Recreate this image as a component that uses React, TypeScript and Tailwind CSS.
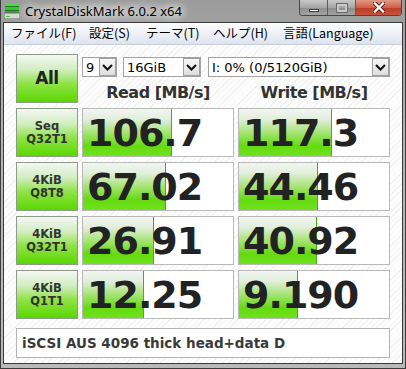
import React from 'react';

interface Row {
  l1: string;
  l2: string;
  read: string;
  readFill: number;
  write: string;
  writeFill: number;
}

const rows: Row[] = [
  { l1: 'Seq', l2: 'Q32T1', read: '106.7', readFill: 89, write: '117.3', writeFill: 93 },
  { l1: '4KiB', l2: 'Q8T8', read: '67.02', readFill: 83, write: '44.46', writeFill: 79 },
  { l1: '4KiB', l2: 'Q32T1', read: '26.91', readFill: 71, write: '40.92', writeFill: 78 },
  { l1: '4KiB', l2: 'Q1T1', read: '12.25', readFill: 61, write: '9.190', writeFill: 59 },
];

const menu = [
  { text: 'ファイル(F)', w: 'w-[78px]' },
  { text: '設定(S)', w: 'w-[57px]' },
  { text: 'テーマ(T)', w: 'w-[67px]' },
  { text: 'ヘルプ(H)', w: 'w-[70px]' },
  { text: '言語(Language)', w: 'w-[100px]' },
];

const Chevron = () => (
  <svg width="11" height="7" viewBox="0 0 11 7">
    <path d="M1 1 L5.5 5.5 L10 1" fill="none" stroke="#111" strokeWidth="2" />
  </svg>
);

const Select: React.FC<{ text: string; className: string }> = ({ text, className }) => (
  <div className={`flex h-[20px] items-center border border-[#a3a3a3] bg-white ${className}`}>
    <span className="pl-[3px] text-[13px] leading-none text-black">{text}</span>
    <div className="ml-auto flex h-full w-[17px] items-center justify-center border border-[#a0a0a0] bg-[linear-gradient(to_bottom,#f7f7f7,#dedede)]">
      <Chevron />
    </div>
  </div>
);

const ValueBox: React.FC<{ value: string; fill: number }> = ({ value, fill }) => (
  <div className="relative flex h-[49px] items-center overflow-hidden border border-[#b9b9b9] bg-white">
    {/* green bar behind the number */}
    <div
      className="absolute bottom-0 left-0 top-0 border-r border-[#45b014] bg-[linear-gradient(to_bottom,#f3f5f2_0%,#e2eedc_22%,#a6e474_50%,#66da10_78%,#6ee21c_100%)]"
      style={{ width: fill }}
    />
    <span className="relative pl-[4px] text-[38px] font-bold leading-none tracking-[-1px] text-[#222]">
      {value}
    </span>
  </div>
);

const LabelBox: React.FC<{ l1: string; l2: string }> = ({ l1, l2 }) => (
  <div className="flex h-[49px] flex-col items-center justify-center border border-[#8c9c88] bg-[linear-gradient(to_bottom,#f4f6f3_0%,#d4eec4_30%,#8ee246_62%,#5ad800_100%)] text-[11.5px] font-bold leading-[13px] text-[#333]">
    <span>{l1}</span>
    <span>{l2}</span>
  </div>
);

export default function App() {
  return (
    <div className="flex h-[369px] w-[406px] flex-col border-x border-b border-[#3c3c3c] bg-[linear-gradient(to_bottom,#9c9c9c,#b4b4b4_40%,#b9b9b9)] px-[2px] pb-[4px] font-['DejaVu_Sans',sans-serif]">
      {/* title bar */}
      <div className="-mx-[2px] flex h-[22px] items-start">
        <svg className="ml-[3px] mt-[3px]" width="16" height="16" viewBox="0 0 16 16">
          <rect x="1" y="0" width="14" height="3" rx="1" fill="#52d64a" />
          <rect x="1" y="3" width="14" height="1" fill="#1f7a1f" />
          <rect x="1" y="4" width="14" height="3" fill="#3fbf3a" />
          <rect x="1" y="7" width="14" height="1" fill="#1f7a1f" />
          <rect x="1" y="8" width="14" height="2" fill="#35a832" />
          <rect x="0" y="10" width="16" height="6" rx="1" fill="#d8d8d8" stroke="#6b6b6b" strokeWidth="1" />
          <rect x="2" y="13" width="4" height="1" fill="#3ccf3a" />
        </svg>
        <span className="ml-[5px] mt-[2px] font-['Noto_Sans',sans-serif] text-[13px] leading-[18px] text-black [text-shadow:0_0_8px_#f2f2f2,0_0_8px_#f2f2f2,0_0_10px_#eeeeee]">
          CrystalDiskMark 6.0.2 x64
        </span>
        {/* caption buttons */}
        <div className="ml-auto mr-[3px] flex h-[16px] overflow-hidden rounded-b-[4px] border border-t-0 border-[#474747]">
          <div className="flex w-[28px] items-center justify-center border-r border-[#5a5a5a] bg-[linear-gradient(to_bottom,#c9c9c9,#a6a6a6_50%,#8d8d8d_51%,#a2a2a2)]">
            <div className="mt-[5px] h-[3px] w-[10px] border border-[#3a3a3a] bg-white" />
          </div>
          <div className="flex w-[28px] items-center justify-center border-r border-[#5a5a5a] bg-[linear-gradient(to_bottom,#c9c9c9,#a6a6a6_50%,#8d8d8d_51%,#a2a2a2)]">
            <div className="h-[8px] w-[10px] border-2 border-[#c8c8c8] outline outline-1 outline-[#6a6a6a]" />
          </div>
          <div className="flex w-[45px] items-center justify-center bg-[linear-gradient(to_bottom,#e09a88,#d0604a_50%,#bb3a26_51%,#c8533a)]">
            <svg width="12" height="11" viewBox="0 0 12 11">
              <path d="M2 1.5 L10 9.5 M10 1.5 L2 9.5" stroke="#5a1a10" strokeWidth="4" strokeLinecap="square" />
              <path d="M2 1.5 L10 9.5 M10 1.5 L2 9.5" stroke="#ffffff" strokeWidth="2.4" strokeLinecap="square" />
            </svg>
          </div>
        </div>
      </div>

      {/* client area */}
      <div className="flex flex-1 flex-col border border-[#3a3a3a]">
        {/* menu bar */}
        <div className="flex h-[22px] items-center border-b border-[#c9d0dc] bg-[linear-gradient(to_bottom,#fdfdfe,#eef1f7_50%,#dde3ee)] pl-[7px] font-['Noto_Sans_CJK_JP',sans-serif] text-[12.5px] text-black">
          {menu.map((m) => (
            <span key={m.text} className={`${m.w} shrink-0 whitespace-nowrap leading-none`}>
              {m.text}
            </span>
          ))}
        </div>

        {/* main panel */}
        <div className="flex flex-1 flex-col gap-[5px] bg-[repeating-linear-gradient(135deg,#ffffff_0px,#ffffff_3px,#f0f0f0_3px,#f0f0f0_4px)] pl-[12px] pt-[9px]">
          <div className="grid grid-cols-[62px_152px_152px] gap-x-[4px]">
            <div className="flex h-[49px] items-center justify-center border border-[#8c9c88] bg-[linear-gradient(to_bottom,#f4f6f3_0%,#d4eec4_30%,#8ee246_62%,#5ad800_100%)]">
              <span className="text-[17px] font-bold leading-none tracking-[-0.5px] text-[#222]">All</span>
            </div>
            <div className="col-span-2 flex flex-col">
              <div className="mt-[3px] flex">
                <Select text="9" className="w-[35px]" />
                <Select text="16GiB" className="ml-[6px] w-[78px]" />
                <Select text="I: 0% (0/5120GiB)" className="ml-[7px] w-[182px]" />
              </div>
              <div className="grid h-[26px] grid-cols-[152px_152px] gap-x-[4px] pt-[6px] text-[16px] font-bold leading-[20px] tracking-[-0.5px] text-[#333]">
                <span className="text-center">Read [MB/s]</span>
                <span className="text-center">Write [MB/s]</span>
              </div>
            </div>
          </div>

          {rows.map((r, i) => (
            <div key={i} className="grid grid-cols-[62px_152px_152px] gap-x-[4px]">
              <LabelBox l1={r.l1} l2={r.l2} />
              <ValueBox value={r.read} fill={r.readFill} />
              <ValueBox value={r.write} fill={r.writeFill} />
            </div>
          ))}

          <div className="mt-[4px] flex h-[30px] w-[374px] items-center border border-[#b4b4b4] bg-white pl-[5px] text-[13.5px] font-bold text-[#3a3a3a]">
            iSCSI AUS 4096 thick head+data D
          </div>
        </div>
      </div>
    </div>
  );
}
